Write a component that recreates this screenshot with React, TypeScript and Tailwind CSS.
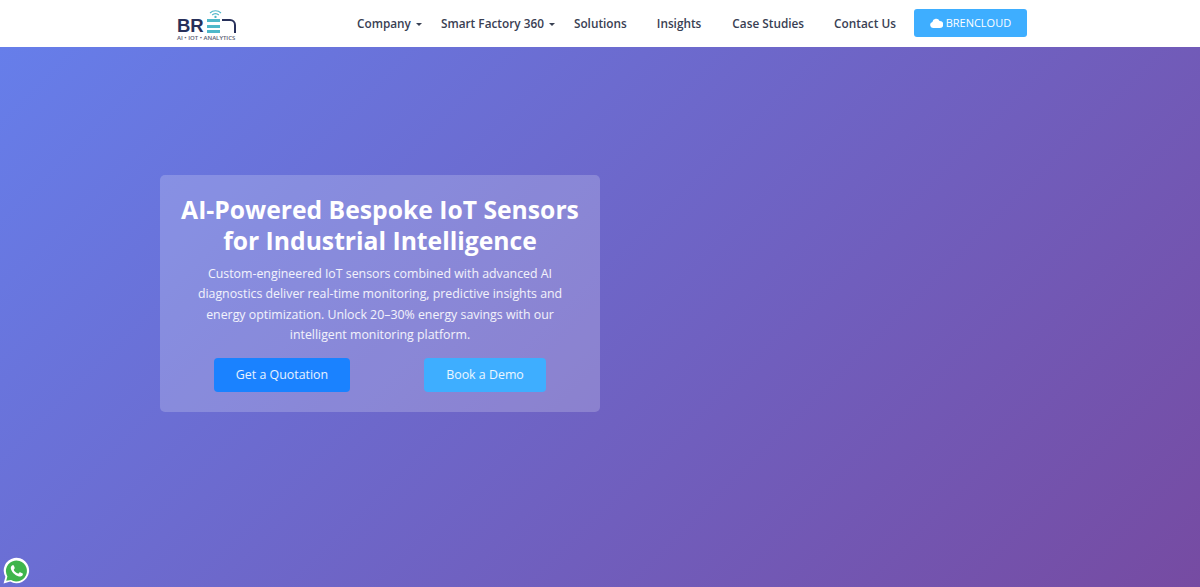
const navItems = [
    { label: 'Company', caret: true, className: '' },
    { label: 'Smart Factory 360', caret: true, className: 'ml-[19px]' },
    { label: 'Solutions', caret: false, className: 'ml-[19px]' },
    { label: 'Insights', caret: false, className: 'ml-[30px]' },
    { label: 'Case Studies', caret: false, className: 'ml-[31px]' },
    { label: 'Contact Us', caret: false, className: 'ml-[30px]' },
];

function Caret() {
    return <span className="ml-[5px] mt-[2px] inline-block border-x-[3px] border-t-[3px] border-x-transparent border-t-[#394053]" />;
}

function Logo() {
    return (
        <div className="relative h-[47px] w-[62px] shrink-0">
            {/* wifi arcs above the E */}
            <svg className="absolute left-[33px] top-[9px]" width="13" height="9" viewBox="0 0 13 9" fill="none" stroke="#4fb8c9" strokeWidth="1.1">
                <path d="M1 4a8 8 0 0 1 11 0" />
                <path d="M3.2 6a4.6 4.6 0 0 1 6.6 0" />
                <circle cx="6.5" cy="8" r="0.6" fill="#4fb8c9" />
            </svg>
            <span className="absolute left-[1px] top-[19px] font-['Liberation_Sans',sans-serif] text-[18.5px] font-bold leading-[13px] text-[#27305a]">BR</span>
            <div className="absolute left-[31px] top-[19px] flex w-[13px] flex-col gap-[2.5px]">
                <div className="h-[3px] bg-[#4fb8c9]" />
                <div className="h-[3px] bg-[#4fb8c9]" />
                <div className="h-[3px] bg-[#4fb8c9]" />
            </div>
            <svg className="absolute left-[46px] top-[18px]" width="14" height="15" viewBox="0 0 14 15" fill="none" stroke="#27305a" strokeWidth="2">
                <path d="M0 2h8a5 5 0 0 1 5 5v8" />
            </svg>
            <span className="absolute left-[1px] top-[35px] whitespace-nowrap text-[6px] font-semibold leading-[6px] text-[#5a6072]">AI • IOT • ANALYTICS</span>
        </div>
    );
}

function WhatsApp() {
    return (
        <svg className="absolute bottom-[3px] left-[3px]" width="27" height="27" viewBox="0 0 27 27">
            <path d="M0.6 26.4l1.8-6.6A12.7 12.7 0 1 1 7.3 24.6z" fill="#fff" />
            <path d="M3.2 23.8l1.2-4.4A10.5 10.5 0 1 1 8 23z" fill="#3fb54c" />
            <path d="M10.3 7.6c-.3-.6-.6-.6-.9-.6h-.8c-.3 0-.7.1-1.1.5-.4.4-1.4 1.4-1.4 3.3s1.4 3.9 1.6 4.1c.2.3 2.8 4.4 6.8 6 3.4 1.3 4 1 4.8 1 .7-.1 2.4-1 2.7-1.9.3-.9.3-1.7.2-1.9-.1-.2-.4-.3-.8-.5l-2.8-1.3c-.4-.1-.6-.2-.9.2-.3.4-1 1.3-1.3 1.5-.2.3-.5.3-.9.1-.4-.2-1.7-.6-3.2-2-1.2-1-2-2.4-2.2-2.8-.2-.4 0-.6.2-.8l.6-.7c.2-.2.3-.4.4-.7.1-.3.1-.5 0-.7z" fill="#fff" transform="translate(3.2 3) scale(0.75)" />
        </svg>
    );
}

export default function App() {
    return (
        <div className="relative h-[587px] w-[1200px] overflow-hidden font-['Open_Sans',sans-serif]">
            {/* Header */}
            <header className="flex h-[47px] items-center bg-white pl-[176px]">
                <Logo />
                <nav className="ml-[119px] flex items-center">
                    {navItems.map((item) => (
                        <a key={item.label} className={`flex items-center whitespace-nowrap text-[11.8px] font-semibold text-[#394053] ${item.className}`}>
                            {item.label}
                            {item.caret && <Caret />}
                        </a>
                    ))}
                    <button className="-mt-[1px] ml-[18px] flex h-[28px] w-[113px] items-center justify-center gap-[3px] rounded-[3px] bg-[#3eaeff] text-[11px] text-white">
                        <svg width="13" height="10" viewBox="0 0 13 10" fill="white">
                            <path d="M3 10a3 3 0 0 1-.6-5.9A3.8 3.8 0 0 1 9.6 3 3.5 3.5 0 0 1 10 10z" />
                        </svg>
                        BRENCLOUD
                    </button>
                </nav>
            </header>

            {/* Hero */}
            <main className="h-[540px] bg-[linear-gradient(135deg,#667eea,#764ba2)] pl-[160px] pt-[128px]">
                <div className="flex h-[237px] w-[440px] flex-col items-center rounded-[5px] bg-white/20 pt-[19px] text-center text-white">
                    <h1 className="text-[24.7px] font-bold leading-[31px]">
                        AI-Powered Bespoke IoT Sensors
                        <br />
                        for Industrial Intelligence
                    </h1>
                    <p className="mt-[8px] text-[12.35px] leading-[20.4px] text-white/90">
                        Custom-engineered IoT sensors combined with advanced AI
                        <br />
                        diagnostics deliver real-time monitoring, predictive insights and
                        <br />
                        energy optimization. Unlock 20–30% energy savings with our
                        <br />
                        intelligent monitoring platform.
                    </p>
                    <div className="mt-[12px] flex gap-[74px]">
                        <button className="h-[34px] w-[136px] rounded-[4px] bg-[#1a82ff] pt-[1px] text-[12.4px] text-white/90">Get a Quotation</button>
                        <button className="h-[34px] w-[122px] rounded-[4px] bg-[#3eaeff] pt-[1px] text-[12.4px] text-white/90">Book a Demo</button>
                    </div>
                </div>
            </main>

            <WhatsApp />
        </div>
    );
}
